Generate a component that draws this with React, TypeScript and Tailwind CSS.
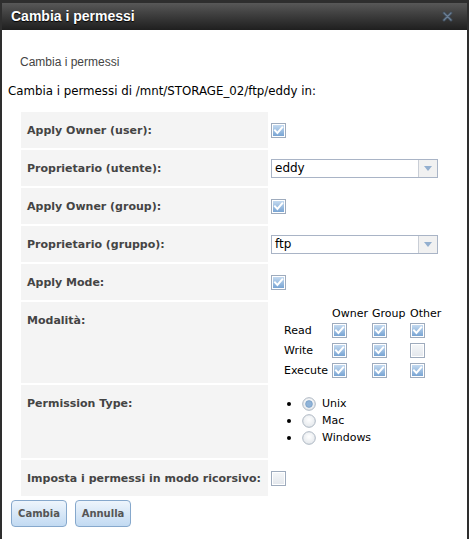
import React from "react";

const V = { fontFamily: '"DejaVu Sans", Verdana, sans-serif' };
const A = { fontFamily: '"Liberation Sans", Arial, sans-serif' };

function Check({ checked = true }: { checked?: boolean }) {
  return (
    <svg width="15" height="15" viewBox="0 0 15 15" className="block">
      <defs>
        <linearGradient id="cbg" x1="0" y1="0" x2="0" y2="1">
          <stop offset="0" stopColor="#c4daf0" />
          <stop offset="1" stopColor="#78a4d3" />
        </linearGradient>
        <linearGradient id="cbu" x1="0" y1="0" x2="0" y2="1">
          <stop offset="0" stopColor="#f4f6f8" />
          <stop offset="1" stopColor="#e4e8ed" />
        </linearGradient>
      </defs>
      <rect x="0.5" y="0.5" width="14" height="14" fill="#fff" stroke="#9eabbd" />
      <rect x="2" y="2" width="11" height="11" fill={checked ? "url(#cbg)" : "url(#cbu)"} />
      {checked && (
        <path d="M4 7.4 L6.4 9.9 L11.2 4.4" fill="none" stroke="#fff" strokeWidth="2" strokeLinecap="square" />
      )}
    </svg>
  );
}

function Radio({ checked = false }: { checked?: boolean }) {
  return (
    <svg width="14" height="14" viewBox="0 0 14 14" className="block">
      <defs>
        <radialGradient id="rg" cx="0.5" cy="0.4" r="0.6">
          <stop offset="0" stopColor="#ffffff" />
          <stop offset="1" stopColor="#e3e7eb" />
        </radialGradient>
      </defs>
      <circle cx="7" cy="7" r="6.3" fill="url(#rg)" stroke="#adb7c2" />
      {checked && <circle cx="7" cy="7" r="3.4" fill="#8fb3d8" stroke="#7199c2" strokeWidth="0.7" />}
    </svg>
  );
}

function Select({ value }: { value: string }) {
  return (
    <div className="flex h-[19px] w-[167px] border border-[#a9b4c6] bg-white">
      <div className="flex-1 pl-[3px] text-[12px] leading-[17px] text-black" style={V}>
        {value}
      </div>
      <div className="flex w-[19px] items-center justify-center border-l border-[#c9ced6] bg-[#f1f1f1]">
        <svg width="8" height="5" viewBox="0 0 8 5">
          <path d="M0 0 H8 L4 5 Z" fill="#93afcf" />
        </svg>
      </div>
    </div>
  );
}

function Row({ label, h, children, align = "center" }: { label: string; h: string; children: React.ReactNode; align?: "center" | "start" }) {
  return (
    <div className="flex gap-[2px]">
      <div className={`w-[247px] shrink-0 bg-[#f4f4f4] pl-[6px] pt-[12px] text-[11px] font-bold leading-[13px] text-[#444] ${h}`} style={V}>
        {label}
      </div>
      <div className={`flex flex-1 pl-[1px] ${align === "center" ? "items-center" : "items-start"}`}>{children}</div>
    </div>
  );
}

export default function App() {
  const perms: [string, boolean[]][] = [
    ["Read", [true, true, true]],
    ["Write", [true, true, false]],
    ["Execute", [true, true, true]],
  ];
  return (
    <div className="h-[539px] w-[469px] overflow-hidden bg-[#2e2e2e] pt-[3px]">
      <div className="mx-[2px] flex h-[536px] flex-col bg-white">
        <div className="flex h-[27px] items-center justify-between bg-gradient-to-b from-[#585858] to-[#1f1f1f] pl-[9px] pr-[14px]">
          <span className="text-[14px] font-bold text-white [text-shadow:0_1px_1px_#000]" style={A}>
            Cambia i permessi
          </span>
          <svg width="11" height="11" viewBox="0 0 11 11">
            <path d="M2 2 L9 9 M9 2 L2 9" stroke="#3f4c5a" strokeWidth="3" strokeLinecap="round" />
            <path d="M2 2 L9 9 M9 2 L2 9" stroke="#6c7f94" strokeWidth="1.3" strokeLinecap="round" />
          </svg>
        </div>
        <div className="pl-[18px] pt-[25px] text-[12px] leading-[14px] text-[#444]" style={A}>
          Cambia i permessi
        </div>
        <div className="pl-[6px] pt-[15px] text-[11.8px] leading-[14px] text-black" style={V}>
          Cambia i permessi di /mnt/STORAGE_02/ftp/eddy in:
        </div>
        <div className="ml-[19px] mt-[14px] flex w-[440px] flex-col gap-[2px]">
          <Row label="Apply Owner (user):" h="h-[36px]">
            <Check />
          </Row>
          <Row label="Proprietario (utente):" h="h-[36px]">
            <Select value="eddy" />
          </Row>
          <Row label="Apply Owner (group):" h="h-[36px]">
            <Check />
          </Row>
          <Row label="Proprietario (gruppo):" h="h-[36px]">
            <Select value="ftp" />
          </Row>
          <Row label="Apply Mode:" h="h-[36px]">
            <Check />
          </Row>
          <Row label="Modalità:" h="h-[81px]" align="start">
            <div className="ml-[13px] mt-[5px] grid grid-cols-[48px_40px_38px_40px] text-[11px] leading-[13px] text-black" style={V}>
              <div />
              <div>Owner</div>
              <div>Group</div>
              <div>Other</div>
              {perms.map(([name, vals]) => (
                <React.Fragment key={name}>
                  <div className="flex h-[20px] items-center">{name}</div>
                  {vals.map((v, i) => (
                    <div key={i} className="flex h-[20px] items-center">
                      <Check checked={v} />
                    </div>
                  ))}
                </React.Fragment>
              ))}
            </div>
          </Row>
          <Row label="Permission Type:" h="h-[73px]" align="start">
            <ul className="ml-[16px] mt-[10px] text-[11px] leading-[17px] text-black" style={V}>
              {[
                ["Unix", true],
                ["Mac", false],
                ["Windows", false],
              ].map(([n, c]) => (
                <li key={n as string} className="flex h-[17px] items-center">
                  <span className="mr-[11px] h-[4px] w-[4px] rounded-full bg-black" />
                  <Radio checked={c as boolean} />
                  <span className="ml-[6px]">{n as string}</span>
                </li>
              ))}
            </ul>
          </Row>
          <Row label="Imposta i permessi in modo ricorsivo:" h="h-[36px]">
            <Check checked={false} />
          </Row>
        </div>
        <div className="ml-[9px] mt-[4px] flex gap-[8px]">
          {["Cambia", "Annulla"].map((b) => (
            <button
              key={b}
              className="h-[27px] w-[56px] rounded-[4px] border border-[#86a8cc] bg-gradient-to-b from-[#eef5fc] to-[#c2daf2] text-[10px] font-bold text-[#555]"
              style={V}
            >
              {b}
            </button>
          ))}
        </div>
      </div>
    </div>
  );
}
